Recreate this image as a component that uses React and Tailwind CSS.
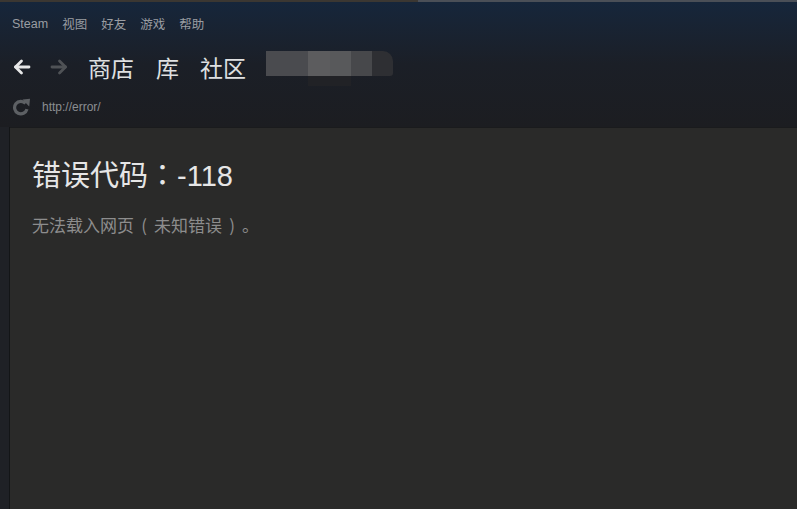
import React from 'react'

const cjk = { fontFamily: '"Microsoft YaHei", "Noto Sans CJK SC", sans-serif', textSpacingTrim: 'space-all' }
const centred = { fontFamily: '"Noto Sans CJK TC", sans-serif' }
const latin = { fontFamily: '"Liberation Sans", "Noto Sans CJK SC", sans-serif' }

const menu = ['Steam', '视图', '好友', '游戏', '帮助']

const Arrow = ({ dir = 'left', color }) => (
  <svg width="18" height="18" viewBox="0 0 18 18" className="block">
    <g
      fill="none"
      stroke={color}
      strokeWidth="2.8"
      strokeLinecap="round"
      strokeLinejoin="round"
      transform={dir === 'right' ? 'translate(18,0) scale(-1,1)' : undefined}
    >
      <path d="M2.5 9 H16" />
      <path d="M8.5 3 L2.5 9 L8.5 15" />
    </g>
  </svg>
)

const Reload = () => (
  <svg width="19" height="18" viewBox="0 0 19 18" className="block">
    <path
      d="M13.6 5.4 A6.3 6.3 0 1 0 15 11.2"
      fill="none"
      stroke="#5d6064"
      strokeWidth="3.2"
    />
    <path d="M10.5 1.6 L18 0.8 L17.2 8.4 Z" fill="#5d6064" />
  </svg>
)

const Cell = ({ children, font = centred, className = 'w-[1em]' }) => (
  <span className={`inline-block text-center ${className}`} style={font}>
    {children}
  </span>
)

export default function App() {
  return (
    <div className="w-[797px] h-[509px] overflow-hidden flex flex-col bg-[#1f2125]">
      <div className="h-[2px] flex shrink-0">
        <div className="w-[418px] bg-[#3b3732]" />
        <div className="flex-1 bg-[#4a4f57]" />
      </div>
      <div className="shrink-0 bg-gradient-to-b from-[#16263b] via-[#1b1f27] to-[#1c1d21]">
        <div className="h-[44px] flex items-center pl-[12px] gap-[14px] pt-[1px] text-[12.5px] text-[#9a9da2]">
          {menu.map((m) => (
            <span key={m} style={m === 'Steam' ? latin : cjk} className="leading-none">
              {m}
            </span>
          ))}
        </div>
        <div className="h-[42px] flex items-center pl-[13px]">
          <Arrow color="#e6e7e8" />
          <div className="w-[19px]" />
          <Arrow dir="right" color="#4f5256" />
          <div className="flex items-center ml-[20px] text-[23px] text-[#dfe0e1] leading-none" style={cjk}>
            <span>商店</span>
            <span className="ml-[22px]">库</span>
            <span className="ml-[21px]">社区</span>
          </div>
          <div className="ml-[20px] relative h-[25px] flex -mt-[8px]">
            <div className="w-[42px] bg-[#4a4b4f]" />
            <div className="w-[22px] bg-[#5c5c5e]" />
            <div className="w-[21px] bg-[#58595b]" />
            <div className="w-[21px] bg-[#47484b]" />
            <div className="w-[21px] bg-[#2e2f33] rounded-tr-[10px] rounded-br-[3px]" />
            <div className="absolute left-[42px] top-[25px] w-[43px] h-[10px] bg-[#212226]" />
          </div>
        </div>
        <div className="h-[39px] flex items-center pl-[12px] pb-[1px]">
          <Reload />
          <span className="ml-[11px] text-[12px] text-[#8b8e92]" style={latin}>
            http://error/
          </span>
        </div>
      </div>
      <div className="flex-1 flex">
        <div className="w-[9px] bg-[#1f2126]" />
        <div className="w-[1px] bg-[#131517]" />
        <div className="flex-1 bg-[#2a2a29] border-t border-[#1a1b1d] pl-[22px] pt-[25px]">
          <div className="text-[29px] leading-[40px] text-[#e6e6e6] flex items-baseline" style={cjk}>
            <span>错误代码</span>
            <Cell>：</Cell>
            <span style={latin}>-118</span>
          </div>
          <div className="mt-[17px] text-[17px] leading-[24px] text-[#8d8d8d] whitespace-nowrap" style={cjk}>
            无法载入网页
            <Cell font={cjk} className="w-[20px]">(</Cell>
            未知错误
            <Cell font={cjk} className="w-[20px]">)</Cell>
            <Cell font={cjk} className="w-[17px] text-right">。</Cell>
          </div>
        </div>
      </div>
    </div>
  )
}
